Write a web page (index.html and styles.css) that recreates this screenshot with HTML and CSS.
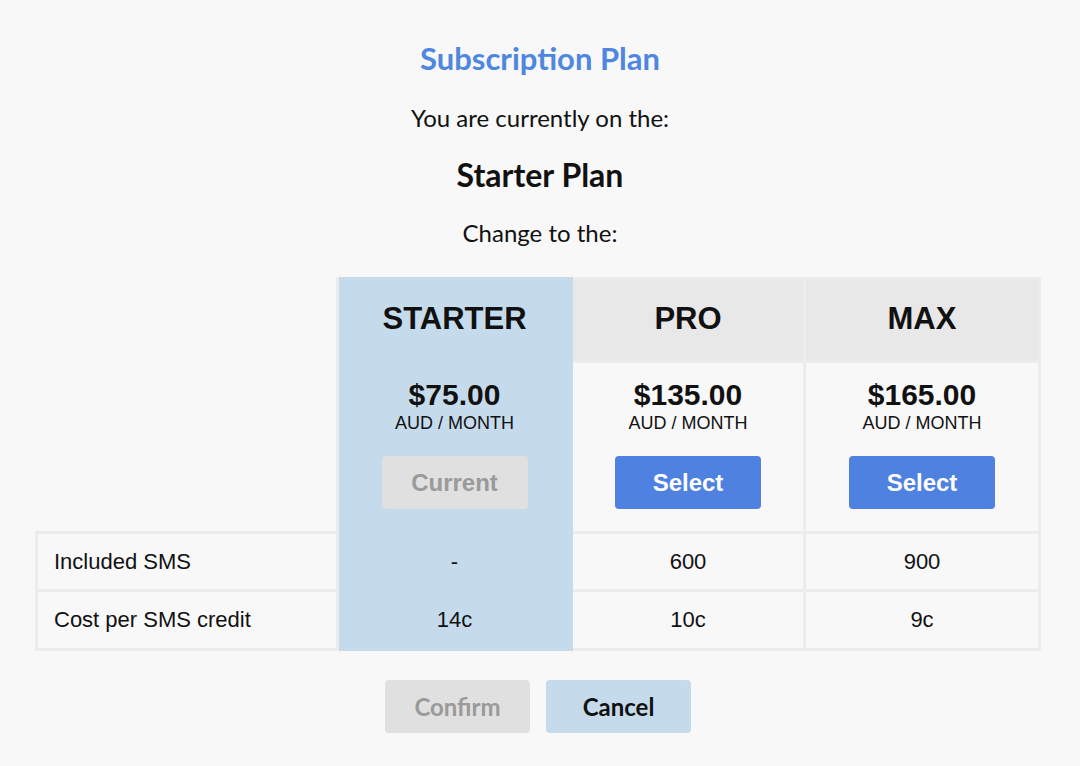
FILE: index.html
```html
<!DOCTYPE html>
<html>
<head>
<meta charset="utf-8">
<link rel="stylesheet" href="styles.css">
</head>
<body>
<div class="page">
  <h1 class="title">Subscription Plan</h1>
  <p class="line">You are currently on the:</p>
  <h2 class="current-plan">Starter Plan</h2>
  <p class="line change">Change to the:</p>

  <div class="plans">
    <div class="cell corner"></div>
    <div class="cell head starter">STARTER</div>
    <div class="cell head">PRO</div>
    <div class="cell head last">MAX</div>

    <div class="cell price starter">
      <div class="amount">$75.00</div>
      <div class="period">AUD / MONTH</div>
      <button class="btn current">Current</button>
    </div>
    <div class="cell price">
      <div class="amount">$135.00</div>
      <div class="period">AUD / MONTH</div>
      <button class="btn select">Select</button>
    </div>
    <div class="cell price last">
      <div class="amount">$165.00</div>
      <div class="period">AUD / MONTH</div>
      <button class="btn select">Select</button>
    </div>

    <div class="cell label">Included SMS</div>
    <div class="cell value starter">-</div>
    <div class="cell value">600</div>
    <div class="cell value last">900</div>

    <div class="cell label">Cost per SMS credit</div>
    <div class="cell value starter">14c</div>
    <div class="cell value">10c</div>
    <div class="cell value last">9c</div>
  </div>

  <div class="actions">
    <button class="act confirm">Confirm</button>
    <button class="act cancel">Cancel</button>
  </div>
</div>
</body>
</html>
```
FILE: styles.css
```css
html, body {
  margin: 0;
  padding: 0;
  background: #f8f8f8;
}
.page {
  width: 1080px;
  height: 766px;
  padding-top: 40px;
  box-sizing: border-box;
  font-family: Lato, "Liberation Sans", sans-serif;
  color: #111;
  text-align: center;
}
.title {
  margin: 0;
  font-size: 31px;
  line-height: 36px;
  font-weight: 700;
  color: #4f86e0;
}
.line {
  margin: 27px 0 0;
  font-size: 24px;
  line-height: 30px;
  color: #111;
}
.current-plan {
  margin: 23px 0 0;
  font-size: 32px;
  line-height: 38px;
  font-weight: 700;
  color: #111;
}
.line.change {
  margin-top: 24px;
}
.plans {
  margin: 29px 0 0 35px;
  display: grid;
  grid-template-columns: 304px 234px 233px 235px;
  grid-template-rows: 86px 171px 58px 59px;
  font-family: "Liberation Sans", Arial, sans-serif;
  text-align: center;
}
.cell {
  box-sizing: border-box;
  background: #f8f8f8;
  border-right: 3px solid #ececec;
  border-bottom: 3px solid #ececec;
  display: flex;
  align-items: center;
  justify-content: center;
  color: #111;
}
.corner {
  grid-row: span 2;
  background: transparent;
}
.head {
  border-top: 3px solid #ececec;
  background: #e8e8e8;
  font-size: 31px;
  font-weight: 700;
  color: #111;
  padding-bottom: 2px;
}
.price {
  flex-direction: column;
  justify-content: flex-start;
  padding-top: 16px;
}
.amount {
  font-size: 30px;
  font-weight: 700;
  line-height: 32px;
}
.period {
  font-size: 18px;
  line-height: 20px;
  margin-top: 2px;
}
.btn {
  margin-top: 23px;
  width: 146px;
  height: 53px;
  border: none;
  border-radius: 4px;
  font-family: "Liberation Sans", Arial, sans-serif;
  font-size: 24px;
  font-weight: 700;
  padding: 0;
}
.btn.current {
  background: #e0e0e0;
  color: #9a9a9a;
}
.btn.select {
  background: #4f81e0;
  color: #fff;
}
.label {
  border-left: 3px solid #ececec;
  justify-content: flex-start;
  padding-left: 16px;
  font-size: 22px;
}
.value {
  font-size: 22px;
}
.cell.starter {
  background: #c5dbec;
  border-color: #c5dbec;
}
.actions {
  margin-top: 29px;
  display: flex;
  justify-content: center;
  gap: 16px;
  margin-left: -4px;
}
.act {
  width: 145px;
  height: 53px;
  border: none;
  border-radius: 4px;
  font-family: Lato, "Liberation Sans", sans-serif;
  font-size: 24px;
  font-weight: 700;
  padding: 0;
}
.act.confirm {
  background: #e0e0e0;
  color: #9a9a9a;
}
.act.cancel {
  background: #c5dbec;
  color: #111;
}
```
